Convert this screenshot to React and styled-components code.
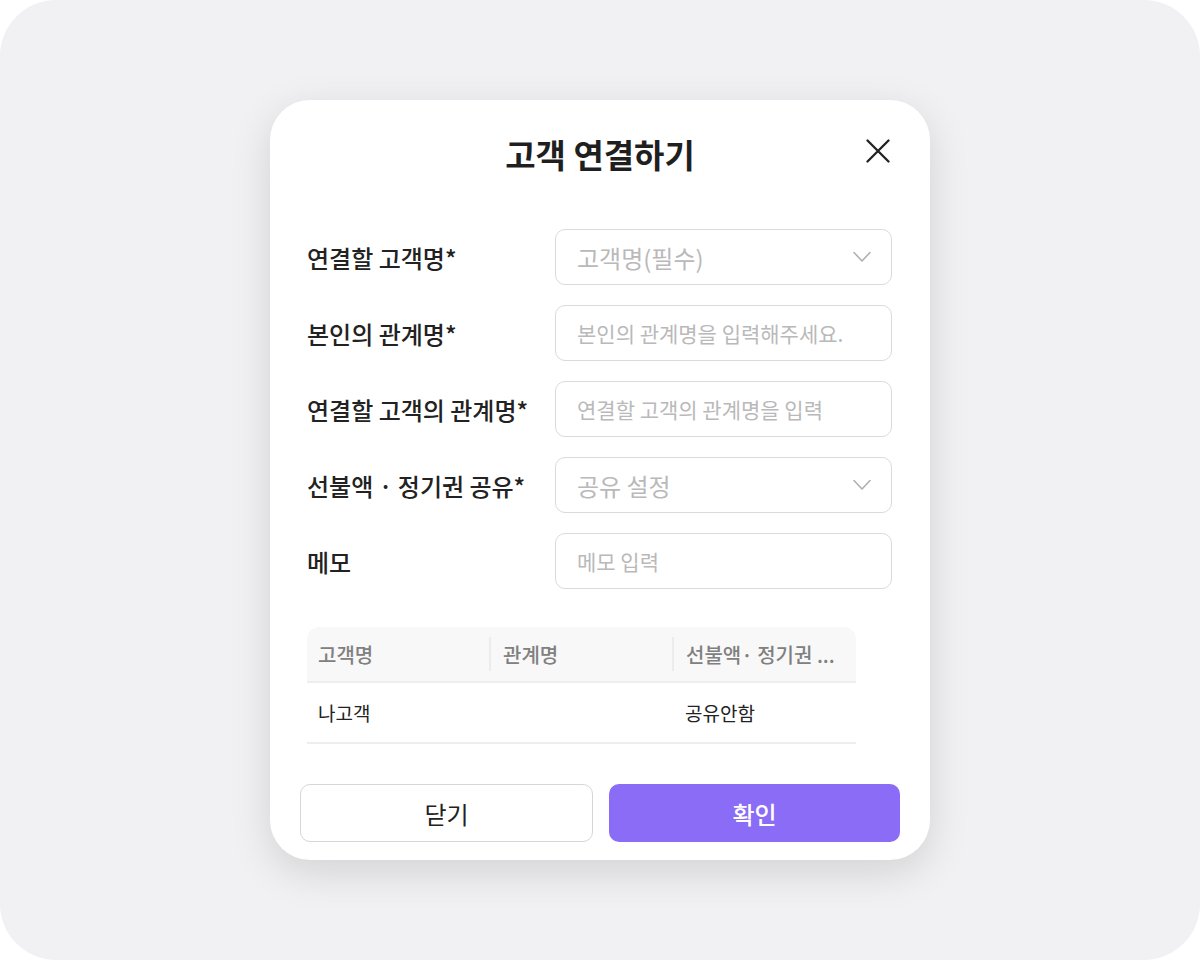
import React from "react";
import styled, { createGlobalStyle } from "styled-components";

const GlobalStyle = createGlobalStyle`
  html, body {
    margin: 0;
    padding: 0;
    background: #ffffff;
  }
  body {
    font-family: "Noto Sans CJK KR", "Noto Sans", sans-serif;
  }
  * {
    box-sizing: border-box;
  }
`;

const Page = styled.div`
  width: 1200px;
  height: 960px;
  background: #f1f1f3;
  border-radius: 56px;
  display: flex;
  justify-content: center;
  padding-top: 100px;
`;

const Modal = styled.div`
  width: 660px;
  height: 760px;
  background: #fff;
  border-radius: 40px;
  box-shadow: 0 12px 40px rgba(0, 0, 0, 0.13);
  display: flex;
  flex-direction: column;
  padding: 26px 30px 18px 30px;
`;

const Header = styled.div`
  position: relative;
  height: 56px;
  display: flex;
  align-items: center;
  justify-content: center;
`;

const Title = styled.h1`
  margin: 0;
  font-size: 33px;
  font-weight: 700;
  color: #1f1f1f;
`;

const CloseButton = styled.button`
  position: absolute;
  right: 5px;
  top: 8px;
  width: 34px;
  height: 34px;
  padding: 0;
  border: none;
  background: none;
  display: flex;
  align-items: center;
  justify-content: center;
  cursor: pointer;
`;

const Form = styled.div`
  margin-top: 47px;
  padding: 0 8px 0 7px;
  display: flex;
  flex-direction: column;
  gap: 20px;
`;

const Row = styled.div`
  display: flex;
  align-items: center;
  height: 56px;
`;

const Label = styled.label`
  width: 248px;
  flex-shrink: 0;
  font-size: 24px;
  font-weight: 500;
  color: #222;
  white-space: nowrap;
`;

const Field = styled.div`
  flex: 1;
  height: 56px;
  border: 1.5px solid #dadada;
  border-radius: 10px;
  display: flex;
  align-items: center;
  justify-content: space-between;
  padding: 0 20px 0 21px;
  font-size: ${(p) => (p.$big ? "24px" : "21px")};
  color: #b9b9b9;
  white-space: nowrap;
`;

const Table = styled.div`
  margin: 38px 44px 0 7px;
`;

const HeadRow = styled.div`
  display: grid;
  grid-template-columns: 182px 183px 1fr;
  height: 56px;
  background: #f8f8f8;
  border-radius: 12px 12px 0 0;
  border-bottom: 2px solid #eeeeee;
  align-items: center;
`;

const HeadCell = styled.div`
  font-size: 20px;
  font-weight: 500;
  color: #808080;
  padding-left: ${(p) => (p.$first ? "11px" : "12px")};
  height: 34px;
  display: flex;
  align-items: center;
  border-left: ${(p) => (p.$first ? "none" : "2px solid #ececec")};
  white-space: nowrap;
`;

const BodyRow = styled.div`
  display: grid;
  grid-template-columns: 182px 183px 1fr;
  height: 61px;
  border-bottom: 2px solid #eeeeee;
  align-items: center;
`;

const BodyCell = styled.div`
  font-size: 19px;
  color: #222;
  padding-left: ${(p) => (p.$first ? "11px" : "13px")};
`;

const Footer = styled.div`
  margin-top: auto;
  display: flex;
  gap: 16px;
`;

const Button = styled.button`
  flex: 1;
  height: 58px;
  border-radius: 10px;
  font-family: inherit;
  font-size: 24px;
  font-weight: ${(p) => (p.$primary ? 500 : 400)};
  cursor: pointer;
  border: ${(p) => (p.$primary ? "none" : "1.5px solid #d6d6d6")};
  background: ${(p) => (p.$primary ? "#8b6cf6" : "#fff")};
  color: ${(p) => (p.$primary ? "#fff" : "#222")};
`;

const Chevron = () => (
  <svg width="18" height="12" viewBox="0 0 18 12" fill="none">
    <path d="M1 1.5L9 10L17 1.5" stroke="#b0b0b0" strokeWidth="1.6" strokeLinecap="round" strokeLinejoin="round" />
  </svg>
);

const rows = [
  { label: "연결할 고객명*", placeholder: "고객명(필수)", select: true },
  { label: "본인의 관계명*", placeholder: "본인의 관계명을 입력해주세요." },
  { label: "연결할 고객의 관계명*", placeholder: "연결할 고객의 관계명을 입력" },
  { label: "선불액 · 정기권 공유*", placeholder: "공유 설정", select: true },
  { label: "메모", placeholder: "메모 입력" },
];

const App = () => {
  return (
    <>
      <GlobalStyle />
      <Page>
        <Modal>
          <Header>
            <Title>고객 연결하기</Title>
            <CloseButton aria-label="닫기">
              <svg width="24" height="24" viewBox="0 0 24 24" fill="none">
                <path d="M1.5 1.5L22.5 22.5M22.5 1.5L1.5 22.5" stroke="#222" strokeWidth="2.3" strokeLinecap="round" />
              </svg>
            </CloseButton>
          </Header>

          <Form>
            {rows.map((r) => (
              <Row key={r.label}>
                <Label>{r.label}</Label>
                <Field $big={r.select}>
                  <span>{r.placeholder}</span>
                  {r.select && <Chevron />}
                </Field>
              </Row>
            ))}
          </Form>

          <Table>
            <HeadRow>
              <HeadCell $first>고객명</HeadCell>
              <HeadCell>관계명</HeadCell>
              <HeadCell>선불액· 정기권 ...</HeadCell>
            </HeadRow>
            <BodyRow>
              <BodyCell $first>나고객</BodyCell>
              <BodyCell></BodyCell>
              <BodyCell>공유안함</BodyCell>
            </BodyRow>
          </Table>

          <Footer>
            <Button>닫기</Button>
            <Button $primary>확인</Button>
          </Footer>
        </Modal>
      </Page>
    </>
  );
};

export default App;
